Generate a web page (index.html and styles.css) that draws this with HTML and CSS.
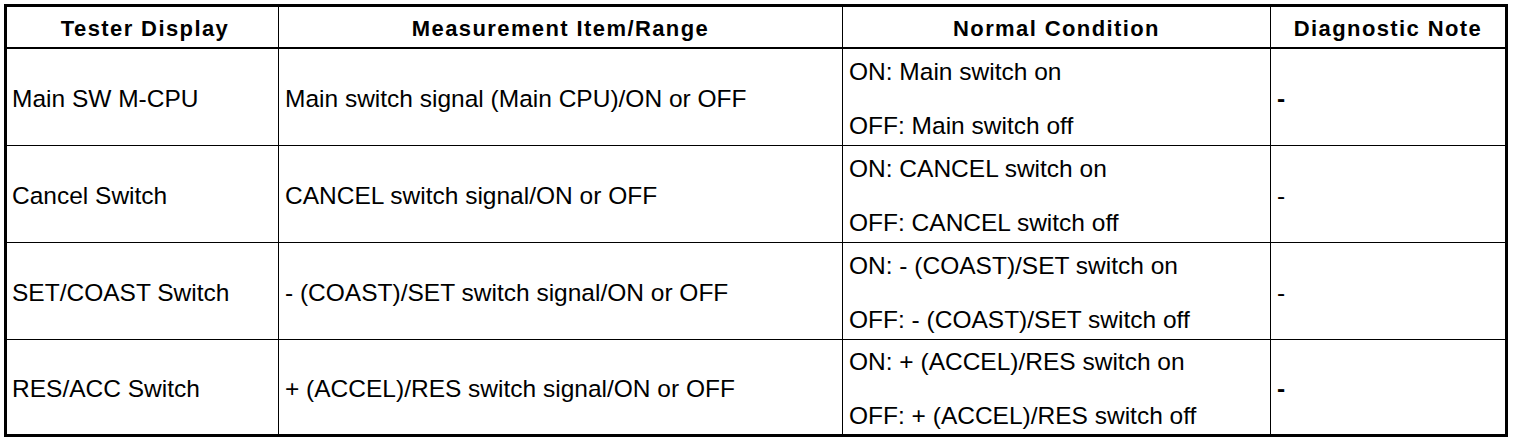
FILE: index.html
```html
<!DOCTYPE html>
<html>
<head>
<meta charset="utf-8">
<link rel="stylesheet" href="styles.css">
</head>
<body>
<table class="spec">
  <colgroup>
    <col class="c1"><col class="c2"><col class="c3"><col class="c4">
  </colgroup>
  <thead>
    <tr>
      <th>Tester Display</th>
      <th>Measurement Item/Range</th>
      <th>Normal Condition</th>
      <th>Diagnostic Note</th>
    </tr>
  </thead>
  <tbody>
    <tr>
      <td>Main SW M-CPU</td>
      <td>Main switch signal (Main CPU)/ON or OFF</td>
      <td class="cond"><div class="on">ON: Main switch on</div><div>OFF: Main switch off</div></td>
      <td class="note bold">-</td>
    </tr>
    <tr>
      <td>Cancel Switch</td>
      <td>CANCEL switch signal/ON or OFF</td>
      <td class="cond"><div class="on">ON: CANCEL switch on</div><div>OFF: CANCEL switch off</div></td>
      <td class="note">-</td>
    </tr>
    <tr>
      <td>SET/COAST Switch</td>
      <td>- (COAST)/SET switch signal/ON or OFF</td>
      <td class="cond"><div class="on">ON: - (COAST)/SET switch on</div><div>OFF: - (COAST)/SET switch off</div></td>
      <td class="note">-</td>
    </tr>
    <tr class="last">
      <td>RES/ACC Switch</td>
      <td>+ (ACCEL)/RES switch signal/ON or OFF</td>
      <td class="cond"><div class="on">ON: + (ACCEL)/RES switch on</div><div>OFF: + (ACCEL)/RES switch off</div></td>
      <td class="note bold">-</td>
    </tr>
  </tbody>
</table>
</body>
</html>
```
FILE: styles.css
```css
html, body {
  margin: 0;
  padding: 0;
  background: #ffffff;
}
body {
  padding: 4px;
  font-family: "Liberation Sans", Arial, sans-serif;
  color: #000;
}
.spec {
  border-collapse: separate;
  border-spacing: 0;
  border: 3px solid #000;
  table-layout: fixed;
  width: 1504px;
}
.c1 { width: 272px; }
.c2 { width: 564px; }
.c3 { width: 428px; }
.c4 { width: 234px; }
.spec th {
  height: 37px;
  padding: 3px 0 0 0;
  font-size: 22px;
  font-weight: bold;
  letter-spacing: 1.4px;
  text-align: center;
  border-right: 1px solid #000;
  border-bottom: 2px solid #000;
  vertical-align: middle;
}
.spec td {
  height: 92px;
  padding: 4px 0 0 6px;
  font-size: 24.5px;
  text-align: left;
  vertical-align: middle;
  border-right: 1px solid #000;
  border-bottom: 1px solid #000;
  line-height: 28px;
  white-space: nowrap;
}
.spec th:first-child,
.spec td:first-child { padding-left: 5px; }
.spec th:last-child,
.spec td:last-child { border-right: none; }
.spec tr.last td { border-bottom: none; height: 90px; }
.cond .on { margin-bottom: 26px; }
.note { padding-left: 7px; }
.bold { font-weight: bold; }
```
